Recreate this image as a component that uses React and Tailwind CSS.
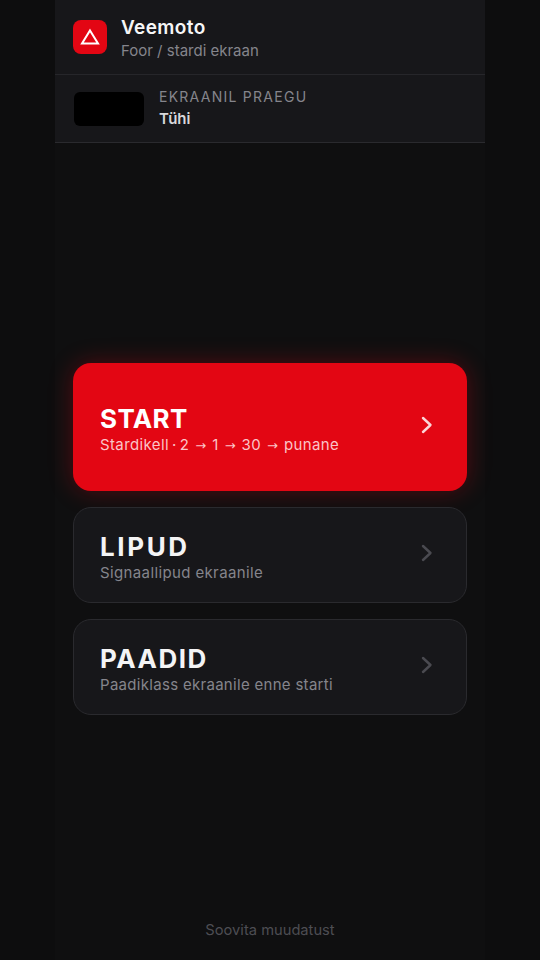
import React from "react";

function Chevron({ className }) {
  return (
    <svg width="24" height="24" viewBox="0 0 24 24" fill="none" stroke="currentColor" strokeWidth="2.4" strokeLinecap="round" strokeLinejoin="round" className={className}>
      <path d="M8 5l7.5 7-7.5 7" />
    </svg>
  );
}

function Arrow() {
  return <span className="mx-[1.4px] font-['DejaVu_Sans',sans-serif] text-[13px] tracking-normal">→</span>;
}

function Card({ title, sub, red, titleClass, subClass }) {
  return (
    <button
      className={
        red
          ? "flex h-32 w-full items-center justify-between rounded-[18px] bg-[#e30613] pl-[27px] pr-[28px] text-left shadow-[0_0_24px_rgba(227,6,19,0.32)]"
          : "flex h-24 w-full items-center justify-between rounded-[18px] border border-[#2a2a2e] bg-[#17171a] pl-[26px] pr-[27px] text-left"
      }
    >
      <div className="flex flex-col pt-[6px]">
        <div className={"text-[26px] font-bold leading-[30px] " + titleClass + " " + (red ? "text-white" : "text-[#f4f4f5]")}>{title}</div>
        <div className={"mt-[1px] h-[20px] text-[15px] leading-[20px] " + subClass + " " + (red ? "text-[#fbc4c8]" : "text-[#85858c]")}>{sub}</div>
      </div>
      <Chevron className={"mb-[4px] " + (red ? "text-[#fbd5d7]" : "text-[#4a4a50]")} />
    </button>
  );
}

export default function App() {
  return (
    <div className="flex h-[960px] w-[540px] justify-center overflow-hidden bg-[#0d0d0e] font-['Inter','Liberation_Sans',sans-serif]">
      <div className="flex h-full w-[430px] flex-col bg-[#0f0f10]">
        <header className="border-b border-[#2a2a2e] bg-[#17171a]">
          <div className="flex h-[75px] items-center gap-[14px] border-b border-[#26262a] px-[18px] pb-[1px]">
            <div className="flex h-[34px] w-[34px] items-center justify-center rounded-[8px] bg-[#e30613]">
              <svg width="20" height="20" viewBox="0 0 20 20" fill="none" stroke="white" strokeWidth="2">
                <path d="M10 3.5 L18 16.5 H2 Z" />
              </svg>
            </div>
            <div className="flex flex-col pt-[3px]">
              <div className="text-[19px] font-semibold leading-[24px] tracking-[0.02em] text-[#f6f6f7]">Veemoto</div>
              <div className="mt-[1px] text-[15px] leading-[20px] text-[#85858c]">Foor / stardi ekraan</div>
            </div>
          </div>
          <div className="flex h-[67px] items-center gap-[15px] px-[19px]">
            <div className="h-[34px] w-[70px] rounded-[6px] bg-black" />
            <div className="flex flex-col">
              <div className="text-[14px] leading-[18px] tracking-[0.09em] text-[#85858c]">EKRAANIL PRAEGU</div>
              <div className="mt-[2px] text-[15px] font-semibold leading-[22px] text-[#d8d8da]">Tühi</div>
            </div>
          </div>
        </header>
        <main className="flex flex-1 flex-col justify-center gap-4 px-[18px] pt-[14px]">
          <Card
            red
            title="START"
            titleClass="tracking-[0.014em]"
            subClass="tracking-[0.025em]"
            sub={<>Stardikell <span className="-mx-[1.5px]">·</span> 2 <Arrow /> 1 <Arrow /> 30 <Arrow /> punane</>}
          />
          <Card title="LIPUD" titleClass="tracking-[0.1em]" subClass="tracking-[0.025em]" sub="Signaallipud ekraanile" />
          <Card title="PAADID" titleClass="tracking-[0.058em]" subClass="tracking-[0.02em]" sub="Paadiklass ekraanile enne starti" />
        </main>
        <footer className="pb-[20px] text-center text-[14.7px] leading-[20px] text-[#4d4d53]">Soovita muudatust</footer>
      </div>
    </div>
  );
}
